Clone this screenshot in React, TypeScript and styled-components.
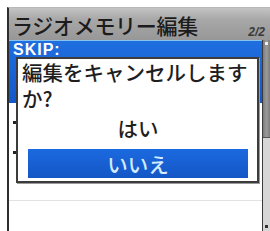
import React from "react";
import styled, { createGlobalStyle } from "styled-components";

const GlobalStyle = createGlobalStyle`
  html, body {
    margin: 0;
    padding: 0;
    background: #ffffff;
  }
  body {
    font-family: "Noto Sans CJK JP", "Noto Sans", sans-serif;
  }
`;

const Screen = styled.div`
  position: relative;
  margin: 7px 0 0 7px;
  width: 263px;
  height: 223px;
  border-left: 2px solid #2e2e2e;
  border-top: 1px solid #b8b8b8;
  background: #ffffff;
  overflow: hidden;
`;

const TitleBar = styled.div`
  height: 32px;
  display: flex;
  align-items: flex-end;
  justify-content: space-between;
  padding: 0 7px 0 3px;
  background: linear-gradient(#c4c4c4, #a8a8a8 35%, #979797);
  color: #1c1c1c;
`;

const Title = styled.span`
  font-size: 21px;
  font-weight: 500;
  line-height: 30px;
  letter-spacing: -0.3px;
`;

const Page = styled.span`
  font-family: "Liberation Sans", sans-serif;
  font-size: 12px;
  font-style: italic;
  font-weight: bold;
  color: #3a3a3a;
  line-height: 12px;
  margin-bottom: 2px;
`;

const Body = styled.div`
  display: flex;
  height: 191px;
`;

const List = styled.div`
  flex: 1;
  display: flex;
  flex-direction: column;
`;

const Selected = styled.div`
  height: 62px;
  border-top: 1px solid #86c4ee;
  background: linear-gradient(#1f6ee0, #1458c8);
  color: #ffffff;
  padding: 0 0 0 4px;
`;

const Label = styled.div`
  font-family: "Liberation Sans", sans-serif;
  font-size: 16px;
  font-weight: bold;
  line-height: 15px;
  letter-spacing: 1px;
  padding-top: 1px;
`;

const Row = styled.div<{ $h: number; $line?: boolean }>`
  position: relative;
  height: ${(p) => p.$h}px;
  border-bottom: ${(p) => (p.$line ? "1px solid #e2e2e2" : "none")};
`;

const Dot = styled.span`
  position: absolute;
  left: 4px;
  top: 18px;
  width: 3px;
  height: 3px;
  background: #222;
`;

const ScrollBar = styled.div`
  width: 7px;
  margin-right: 1px;
  border-left: 1px solid #3a3a3a;
  border-right: 1px solid #3a3a3a;
  background: #d6d6d6;
  display: flex;
  flex-direction: column;
  justify-content: space-between;
`;

const Thumb = styled.div`
  height: 97px;
  background: linear-gradient(90deg, #7c7c7c, #9a9a9a, #7c7c7c);
  border-bottom: 1px solid #555;
  position: relative;
  &::after {
    content: "";
    position: absolute;
    left: 2px;
    top: 2px;
    width: 3px;
    height: 3px;
    background: #f0f0f0;
  }
`;

const BottomMark = styled.div`
  height: 3px;
  width: 3px;
  margin: 0 0 3px 2px;
  background: #333;
`;

const Dialog = styled.div`
  position: absolute;
  left: 7px;
  top: 49px;
  width: 239px;
  height: 122px;
  border: 2px solid #3c3c3c;
  background: #ffffff;
  box-shadow: 1px 1px 0 #9a9a9a;
  display: flex;
  flex-direction: column;
`;

const Message = styled.div`
  font-size: 20.5px;
  font-weight: 500;
  line-height: 26px;
  color: #1e1e1e;
  padding: 0 4px;
`;

const Options = styled.div`
  display: flex;
  flex-direction: column;
  gap: 7px;
  margin-top: 2px;
`;

const Option = styled.div<{ $active?: boolean }>`
  height: 29px;
  margin: 0 9px 0 10px;
  display: flex;
  align-items: center;
  justify-content: center;
  font-size: 20.5px;
  font-weight: 500;
  color: ${(p) => (p.$active ? "#d4ecff" : "#1e1e1e")};
  background: ${(p) =>
    p.$active ? "linear-gradient(#1b6ae0, #1456c6)" : "transparent"};
`;

export default function App() {
  return (
    <>
      <GlobalStyle />
      <Screen>
        <TitleBar>
          <Title>ラジオメモリー編集</Title>
          <Page>2/2</Page>
        </TitleBar>
        <Body>
          <List>
            <Selected>
              <Label>SKIP:</Label>
            </Selected>
            <Row $h={30}>
              <Dot />
            </Row>
            <Row $h={30}>
              <Dot />
            </Row>
            <Row $h={38} $line />
            <Row $h={30} />
          </List>
          <ScrollBar>
            <Thumb />
            <BottomMark />
          </ScrollBar>
        </Body>
        <Dialog>
          <Message>編集をキャンセルしますか?</Message>
          <Options>
            <Option>はい</Option>
            <Option $active>いいえ</Option>
          </Options>
        </Dialog>
      </Screen>
    </>
  );
}
